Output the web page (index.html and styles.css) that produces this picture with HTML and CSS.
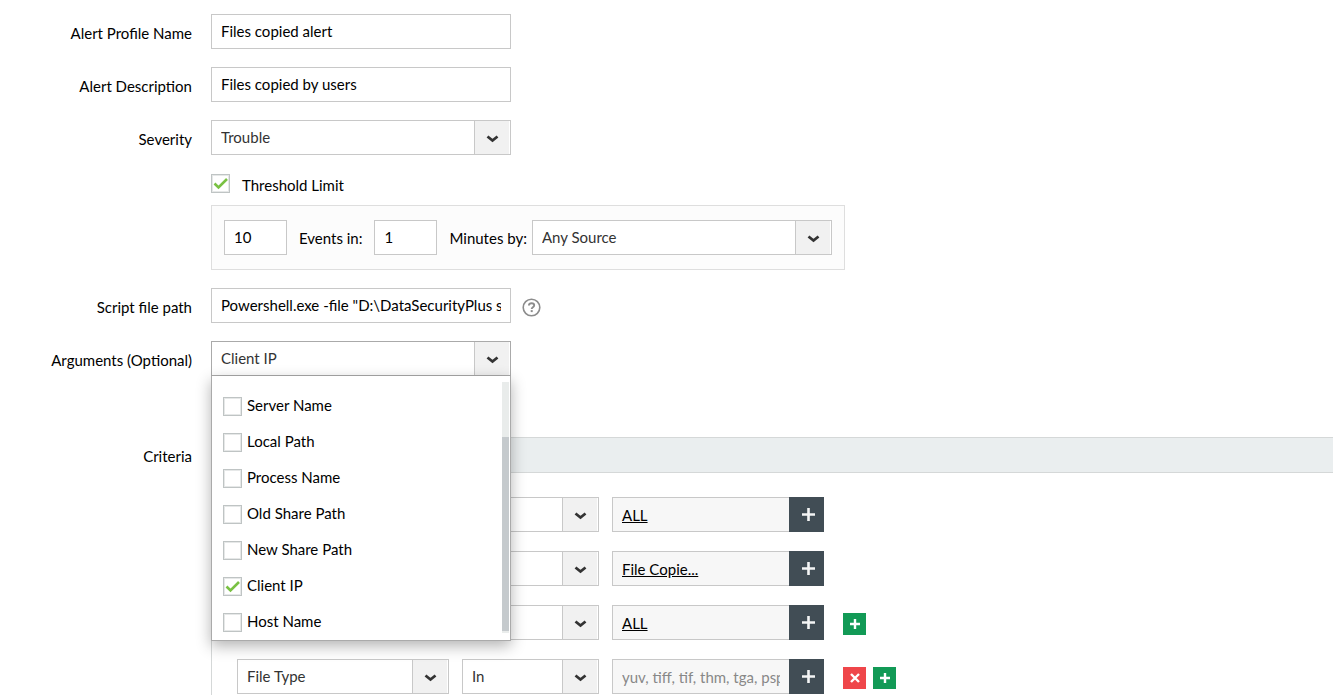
FILE: index.html
```html
<!DOCTYPE html>
<html lang="en">
<head>
  <meta charset="UTF-8">
  <meta name="viewport" content="width=device-width, initial-scale=1">
  <title>Alert Profile</title>
  <link rel="stylesheet" href="styles.css">
</head>
<body>
  <form class="alert-form">
    <div class="row">
      <label class="row-label" for="profileName">Alert Profile Name</label>
      <input class="field" type="text" id="profileName" value="Files copied alert">
    </div>

    <div class="row">
      <label class="row-label" for="description">Alert Description</label>
      <input class="field" type="text" id="description" value="Files copied by users">
    </div>

    <div class="row">
      <label class="row-label" for="severity">Severity</label>
      <select class="field select" id="severity">
        <option>Trouble</option>
      </select>
    </div>

    <!-- Threshold -->
    <div class="row">
      <div class="threshold">
        <label class="check threshold-check"><input type="checkbox" checked> <span>Threshold Limit</span></label>
        <div class="threshold-box">
          <input class="field small" type="text" id="events" value="10">
          <label for="events">Events in:</label>
          <input class="field small" type="text" id="minutes" value="1">
          <label class="minutes-label" for="source">Minutes by:</label>
          <select class="field select" id="source">
            <option>Any Source</option>
          </select>
        </div>
      </div>
    </div>

    <div class="row">
      <label class="row-label" for="script">Script file path</label>
      <div class="with-help">
        <input class="field" type="text" id="script" value='Powershell.exe -file "D:\DataSecurityPlus script.ps1"'>
        <button class="help" type="button" aria-label="Help">
          <svg width="19" height="19" viewBox="0 0 19 19" fill="none" stroke="#8c8c8c">
            <circle cx="9.5" cy="9.5" r="8.3" stroke-width="1.6"/>
            <path d="M6.9 7.5C7 5.9 8.1 5.2 9.6 5.2c1.5 0 2.6.8 2.6 2.1 0 1.9-2.5 1.9-2.5 3.7" stroke-width="1.9"/>
            <path d="M8.7 13.1h2" stroke-width="2"/>
          </svg>
        </button>
      </div>
    </div>

    <!-- Arguments with open list -->
    <div class="row">
      <label class="row-label" for="arguments">Arguments (Optional)</label>
      <div class="multi">
        <button class="field select open" type="button" id="arguments">Client IP</button>
        <div class="menu">
          <div class="menu-list">
            <label class="check"><input type="checkbox"> <span>Server Name</span></label>
            <label class="check"><input type="checkbox"> <span>Local Path</span></label>
            <label class="check"><input type="checkbox"> <span>Process Name</span></label>
            <label class="check"><input type="checkbox"> <span>Old Share Path</span></label>
            <label class="check"><input type="checkbox"> <span>New Share Path</span></label>
            <label class="check"><input type="checkbox" checked> <span>Client IP</span></label>
            <label class="check"><input type="checkbox"> <span>Host Name</span></label>
          </div>
          <div class="scroll-track"><div class="scroll-thumb"></div></div>
        </div>
      </div>
    </div>

    <!-- Criteria -->
    <div class="row criteria">
      <span class="row-label">Criteria</span>
      <div class="criteria-body">
        <div class="criteria-head"></div>
        <div class="criteria-rows">
          <div class="rule">
            <select class="field select name" aria-label="Attribute"><option>Monitor</option></select>
            <select class="field select op" aria-label="Condition"><option>In</option></select>
            <div class="picker">
              <div class="value"><a href="#">ALL</a></div>
              <button class="add" type="button" aria-label="Choose"><svg width="13" height="13" viewBox="0 0 13 13"><path d="M6.5 0v13M0 6.5h13" stroke="#f4f5f5" stroke-width="2.6"/></svg></button>
            </div>
          </div>
          <div class="rule">
            <select class="field select name" aria-label="Attribute"><option>Action</option></select>
            <select class="field select op" aria-label="Condition"><option>In</option></select>
            <div class="picker">
              <div class="value"><a href="#">File Copie...</a></div>
              <button class="add" type="button" aria-label="Choose"><svg width="13" height="13" viewBox="0 0 13 13"><path d="M6.5 0v13M0 6.5h13" stroke="#f4f5f5" stroke-width="2.6"/></svg></button>
            </div>
          </div>
          <div class="rule">
            <select class="field select name" aria-label="Attribute"><option>User</option></select>
            <select class="field select op" aria-label="Condition"><option>In</option></select>
            <div class="picker">
              <div class="value"><a href="#">ALL</a></div>
              <button class="add" type="button" aria-label="Choose"><svg width="13" height="13" viewBox="0 0 13 13"><path d="M6.5 0v13M0 6.5h13" stroke="#f4f5f5" stroke-width="2.6"/></svg></button>
            </div>
            <div class="actions">
              <button class="mini green" type="button" aria-label="Add row"><svg width="10" height="10" viewBox="0 0 10 10"><path d="M5 0v10M0 5h10" stroke="#fff" stroke-width="2.4"/></svg></button>
            </div>
          </div>
          <div class="rule">
            <select class="field select name" aria-label="Attribute"><option>File Type</option></select>
            <select class="field select op" aria-label="Condition"><option>In</option></select>
            <div class="picker">
              <input class="value" type="text" aria-label="File types" placeholder="yuv, tiff, tif, thm, tga, psp, png">
              <button class="add" type="button" aria-label="Choose"><svg width="13" height="13" viewBox="0 0 13 13"><path d="M6.5 0v13M0 6.5h13" stroke="#f4f5f5" stroke-width="2.6"/></svg></button>
            </div>
            <div class="actions">
              <button class="mini red" type="button" aria-label="Remove row"><svg width="10" height="10" viewBox="0 0 10 10"><path d="M1 1l8 8M9 1l-8 8" stroke="#fff" stroke-width="2.4"/></svg></button>
              <button class="mini green" type="button" aria-label="Add row"><svg width="10" height="10" viewBox="0 0 10 10"><path d="M5 0v10M0 5h10" stroke="#fff" stroke-width="2.4"/></svg></button>
            </div>
          </div>
        </div>
      </div>
    </div>
  </form>
</body>
</html>
```
FILE: styles.css
```css
* {
  box-sizing: border-box;
}

body {
  margin: 0;
  background: #fff;
  color: #000;
  font-family: Lato, sans-serif;
  font-size: 15px;
  line-height: 20px;
}

input, select, button {
  font: inherit;
}

.alert-form {
  display: flex;
  flex-direction: column;
  gap: 18px;
  min-height: 100vh;
  padding-top: 14px;
}

.row {
  display: grid;
  grid-template-columns: 192px 1fr;
  column-gap: 19px;
}

.row-label {
  padding-top: 9px;
  text-align: right;
}

/* Fields */
.field {
  width: 300px;
  height: 35px;
  padding: 0 9px 2px;
  border: 1px solid #c8c8c8;
  border-radius: 0;
  background: #fff;
  color: #000;
  text-align: left;
}

.small {
  width: 63px;
}

.select {
  appearance: none;
  padding-right: 44px;
  color: #333;
  background: #fff url("data:image/svg+xml,%3Csvg xmlns='http://www.w3.org/2000/svg' width='36' height='33'%3E%3Cpath fill='%23f1f1f1' d='M0 0h35v33H0z'/%3E%3Cpath fill='%23c8c8c8' d='M0 0h1v33H0z'/%3E%3Cpath fill='none' stroke='%23333' stroke-width='2.8' d='M13.5 15.5l5 4 5-4'/%3E%3C/svg%3E") no-repeat right center;
}

.open {
  border-color: #aaa;
}

/* Checkboxes */
.check {
  display: flex;
  align-items: center;
}

.check input {
  appearance: none;
  flex: none;
  width: 19px;
  height: 19px;
  margin: 0;
  border: 1px solid #bfc4c4;
  box-shadow: inset 0 0 0 1px #e6e8e8;
  background: #fff;
}

.check input:checked {
  background: #fff url("data:image/svg+xml,%3Csvg xmlns='http://www.w3.org/2000/svg' width='17' height='17'%3E%3Cpath fill='none' stroke='%2379c143' stroke-width='2.6' d='M2.5 8.5l4 4 8.5-8.500'/%3E%3C/svg%3E") no-repeat center;
}

/* Threshold */
.threshold {
  grid-column: 2;
}

.threshold-check {
  gap: 12px;
  height: 20px;
  margin-bottom: 12px;
}

.threshold-check span {
  padding-top: 4px;
}

.threshold-box {
  display: flex;
  align-items: center;
  gap: 12px;
  width: fit-content;
  height: 65px;
  padding: 0 12px;
  border: 1px solid #dedede;
  background: #fcfcfc;
}

.minutes-label {
  margin-right: -7px;
}

.with-help {
  display: flex;
  align-items: center;
  gap: 11px;
}

.help {
  display: flex;
  padding: 3px 0 0;
  border: 0;
  background: none;
}

/* Arguments list */
.multi {
  position: relative;
}

.multi .field {
  display: block;
}

.menu {
  position: absolute;
  z-index: 1;
  top: 100%;
  left: 0;
  display: flex;
  width: 300px;
  padding: 6px 1px 7px 11px;
  border: 1px solid #aaa;
  border-top: 0;
  background: #fff;
  box-shadow: 0 5px 14px rgba(0, 0, 0, 0.3);
}

.menu-list {
  flex: 1;
  padding-top: 6px;
  margin-bottom: -7px;
}

.menu .check {
  gap: 5px;
  height: 36px;
}

.menu .check span {
  padding-bottom: 2px;
}

.scroll-track {
  display: flex;
  align-items: flex-end;
  width: 7px;
  padding-bottom: 2px;
  background: #e9eceb;
}

.scroll-thumb {
  width: 7px;
  height: 78%;
  background: #c5cacd;
}

/* Criteria */
.criteria {
  flex: 1;
  margin-top: 43px;
}

.criteria-body {
  border-left: 1px solid #d5d8d8;
}

.criteria-head {
  height: 36px;
  border: 1px solid #d5d8d8;
  border-width: 1px 0;
  background: #eaeeef;
}

.criteria-rows {
  display: flex;
  flex-direction: column;
  gap: 19px;
  padding: 24px 0 0 25px;
}

.rule {
  display: flex;
  gap: 13px;
}

.name {
  width: 212px;
}

.op {
  width: 137px;
}

.picker {
  display: flex;
  width: 212px;
  height: 35px;
}

.value {
  flex: 1;
  min-width: 0;
  padding: 7px 9px 6px;
  border: 1px solid #c8c8c8;
  border-right: 0;
  border-radius: 0;
  background: #f7f7f7;
}

.value::placeholder {
  color: #888;
}

.value a {
  color: #000;
}

.add {
  display: flex;
  align-items: center;
  justify-content: center;
  width: 35px;
  padding: 0 0 1px 4px;
  border: 0;
  background: #414d55;
}

.actions {
  display: flex;
  gap: 7px;
  padding: 8px 0 0 6px;
}

.mini {
  display: flex;
  align-items: center;
  justify-content: center;
  width: 23px;
  height: 22px;
  padding: 0;
  border: 0;
}

.green {
  background: #129a56;
}

.red {
  background: #ef464a;
}
```
